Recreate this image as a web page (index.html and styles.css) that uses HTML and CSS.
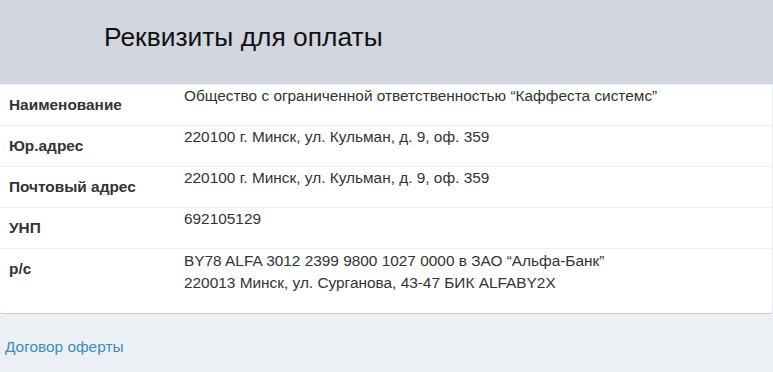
FILE: index.html
```html
<!DOCTYPE html>
<html lang="ru">
<head>
    <meta charset="UTF-8">
    <meta name="viewport" content="width=device-width, initial-scale=1.0">
    <title>Реквизиты для оплаты</title>
    <link rel="stylesheet" href="styles.css">
</head>
<body>
    <header class="page-header">
        <h1>Реквизиты для оплаты</h1>
    </header>

    <div class="box">
        <table class="details">
            <tr>
                <th>Наименование</th>
                <td>Общество с ограниченной ответственностью “Каффеста системс”</td>
            </tr>
            <tr>
                <th>Юр.адрес</th>
                <td>220100 г. Минск, ул. Кульман, д. 9, оф. 359</td>
            </tr>
            <tr>
                <th>Почтовый адрес</th>
                <td>220100 г. Минск, ул. Кульман, д. 9, оф. 359</td>
            </tr>
            <tr>
                <th>УНП</th>
                <td>692105129</td>
            </tr>
            <tr class="last">
                <th>р/с</th>
                <td>BY78 ALFA 3012 2399 9800 1027 0000 в ЗАО “Альфа-Банк”<br>220013 Минск, ул. Сурганова, 43-47 БИК ALFABY2X</td>
            </tr>
        </table>
    </div>

    <div class="footer-links">
        <a href="#offer">Договор оферты</a>
    </div>
</body>
</html>
```

FILE: styles.css
```css
body {
    font-family: "Liberation Sans", Arial, sans-serif;
    font-size: 15.4px;
    margin: 0;
    padding: 0;
    background-color: #ecf0f5;
    color: #333;
}

.page-header {
    background-color: #d2d6de;
    height: 84px;
    padding-left: 104px;
    box-sizing: border-box;
}

.page-header h1 {
    margin: 0;
    padding-top: 21px;
    font-size: 26.4px;
    font-weight: normal;
    color: #111;
    line-height: 32px;
}

.box {
    background: #fff;
    border-top: 1px solid #eef0f3;
    border-radius: 0 0 3px 3px;
    box-shadow: 0 1px 1px rgba(0, 0, 0, 0.15);
    margin-right: 1px;
}

.details {
    width: 100%;
    border-collapse: collapse;
}

.details tr {
    border-bottom: 1px solid #f0f0f0;
}

.details tr.last {
    border-bottom: none;
}

.details th {
    width: 160px;
    text-align: left;
    vertical-align: top;
    padding: 9px 8px 0 9px;
    font-weight: bold;
    font-size: 15.4px;
    line-height: 22px;
    color: #333;
}

.details td {
    vertical-align: top;
    padding: 0 8px 18px 7px;
    font-size: 15.4px;
    line-height: 22px;
    color: #333;
}

.details tr.last td {
    padding-top: 1px;
    padding-bottom: 19px;
}

.footer-links {
    padding: 25px 5px;
}

.footer-links a {
    color: #3c8dbc;
    text-decoration: none;
    font-size: 15.4px;
}
```
